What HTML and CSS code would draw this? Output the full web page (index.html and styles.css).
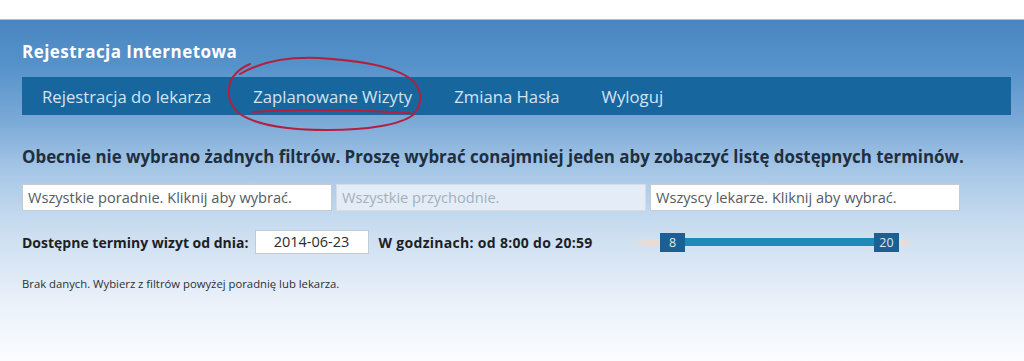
FILE: index.html
```html
<!DOCTYPE html>
<html lang="pl">
<head>
<meta charset="utf-8">
<title>Rejestracja Internetowa</title>
<link rel="stylesheet" href="styles.css">
</head>
<body>
<div class="topbar"></div>
<div class="page">
  <h1 class="title">Rejestracja Internetowa</h1>
  <nav class="menu">
    <a class="menu-item" href="#">Rejestracja do lekarza</a>
    <a class="menu-item" href="#">Zaplanowane Wizyty</a>
    <a class="menu-item" href="#">Zmiana Hasła</a>
    <a class="menu-item" href="#">Wyloguj</a>
  </nav>
  <h2 class="notice">Obecnie nie wybrano żadnych filtrów. Proszę wybrać conajmniej jeden aby zobaczyć listę dostępnych terminów.</h2>
  <div class="filters">
    <div class="field">Wszystkie poradnie. Kliknij aby wybrać.</div>
    <div class="field field-disabled">Wszystkie przychodnie.</div>
    <div class="field">Wszyscy lekarze. Kliknij aby wybrać.</div>
  </div>
  <div class="daterow">
    <span class="label">Dostępne terminy wizyt od dnia:</span>
    <div class="date">2014-06-23</div>
    <span class="label label-hours">W godzinach: od 8:00 do 20:59</span>
    <div class="slider">
      <div class="handle">8</div>
      <div class="range"></div>
      <div class="handle">20</div>
    </div>
  </div>
  <p class="empty">Brak danych. Wybierz z filtrów powyżej poradnię lub lekarza.</p>
</div>
<svg class="annot" width="220" height="80" viewBox="220 55 220 80">
  <path d="M240 74 C262 61 292 57 318 58 C352 60 388 64 408 77 C424 88 423 104 413 115 C400 125 366 130 328 130 C290 130 256 125 240 114 C227 104 226 88 233 77 C237 71 243 67 250 64" fill="none" stroke="#b3203f" stroke-width="2" stroke-linecap="round"/>
  <path d="M253 112 C300 109 360 110 410 113" fill="none" stroke="#b3203f" stroke-width="2" stroke-linecap="round"/>
</svg>
</body>
</html>
```
FILE: styles.css
```css
html, body {
  margin: 0;
  padding: 0;
}
body {
  width: 1024px;
  height: 361px;
  overflow: hidden;
  background: #ffffff;
  font-family: "Open Sans", "Liberation Sans", sans-serif;
  position: relative;
}
.topbar {
  height: 19px;
  background: #ffffff;
  border-bottom: 1px solid #c9bda4;
  box-shadow: 0 1px 0 #eef0f2;
}
.page {
  height: 341px;
  box-sizing: border-box;
  padding: 21px 13px 0 22px;
  background: linear-gradient(to bottom, #4a85bf 0px, #5592ca 45px, #7aa9d7 100px, #a6c6e6 150px, #c6dbef 200px, #dce8f5 250px, #edf3fb 290px, #fbfdff 341px);
}
.title {
  margin: 0;
  font-size: 17px;
  line-height: 22px;
  font-weight: 700;
  color: #ffffff;
  letter-spacing: 0.45px;
}
.menu {
  margin-top: 14px;
  height: 38px;
  background: #17679e;
  display: flex;
  align-items: center;
  padding-left: 20px;
  gap: 42px;
}
.menu-item {
  color: #d3e4f2;
  text-decoration: none;
  font-size: 16.7px;
  font-weight: 400;
}
.notice {
  margin: 31px 0 0;
  font-size: 16.9px;
  line-height: 22px;
  font-weight: 700;
  color: #1e2f40;
  white-space: nowrap;
}
.filters {
  margin-top: 16px;
  display: flex;
  gap: 4px;
}
.field {
  width: 310px;
  height: 27px;
  box-sizing: border-box;
  background: #ffffff;
  border: 1px solid #c3ccd6;
  padding: 0 5px;
  font-size: 14.6px;
  line-height: 25px;
  color: #555b61;
  white-space: nowrap;
}
.field-disabled {
  background: #e4edf7;
  color: #a2b0be;
  border-color: #d3dde8;
}
.daterow {
  margin-top: 19px;
  display: flex;
  align-items: center;
  height: 24px;
}
.label {
  font-size: 14px;
  font-weight: 700;
  color: #1c1f24;
  white-space: nowrap;
}
.label-hours {
  letter-spacing: 0.3px;
}
.date {
  margin-left: 6px;
  margin-right: 10px;
  width: 114px;
  height: 24px;
  box-sizing: border-box;
  background: #ffffff;
  border: 1px solid #c3ccd6;
  text-align: center;
  font-size: 14.5px;
  line-height: 22px;
  color: #2a2d31;
}
.slider {
  margin-left: auto;
  margin-right: 96px;
  width: 283px;
  height: 19px;
  display: flex;
  align-items: center;
  padding: 0 16px 0 28px;
  box-sizing: border-box;
  background: linear-gradient(to right, rgba(233, 220, 212, 0), #e9dcd4 14px, #e9dcd4 271px, rgba(233, 220, 212, 0)) center / 100% 7px no-repeat;
}
.handle {
  width: 25px;
  height: 19px;
  background: #1c5f92;
  color: #dde9f3;
  font-size: 12.5px;
  line-height: 19px;
  text-align: center;
}
.range {
  flex: 1;
  height: 8px;
  background: #1e8bb6;
}
.empty {
  margin: 22px 0 0;
  font-size: 11.3px;
  color: #2b2f35;
}
.annot {
  position: absolute;
  left: 220px;
  top: 55px;
  pointer-events: none;
}
```
